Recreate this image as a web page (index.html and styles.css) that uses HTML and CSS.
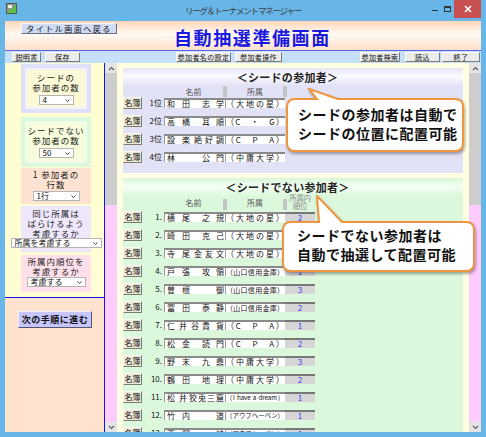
FILE: index.html
```html
<!DOCTYPE html>
<html lang="ja">
<head>
    <meta charset="UTF-8">
    <meta name="viewport" content="width=device-width, initial-scale=1.0">
    <title>リーグ＆トーナメントマネージャー</title>
    <link rel="stylesheet" href="styles.css">
</head>
<body>
    <div class="window">
        <div class="titlebar">
            <div class="title-left">
                <svg class="app-icon" width="11" height="11" viewBox="0 0 11 11">
                    <rect x="0.5" y="0.5" width="10" height="10" fill="#8a968a" stroke="#4f5a4f"/>
                    <path d="M1 10 L10 2 L10 10 Z" fill="#5fbf45"/>
                    <rect x="2" y="2" width="4" height="3" fill="#eeeeee"/>
                </svg>
            </div>
            <span class="win-title">リーグ＆トーナメントマネージャー</span>
            <div class="win-controls">
                <span class="ctl ctl-min"><i></i></span>
                <span class="ctl ctl-max"><i></i></span>
                <span class="ctl ctl-close">
                    <svg width="8" height="8" viewBox="0 0 8 8"><path d="M1 1 L7 7 M7 1 L1 7" stroke="#fff" stroke-width="1.6"/></svg>
                </span>
            </div>
        </div>

        <div class="client">
            <div class="head">
                <button class="back-btn">タイトル画面へ戻る</button>
                <h1>自動抽選準備画面</h1>
            </div>

            <div class="toolbar">
                <div class="tool-group">
                    <button class="tool-btn btn-manual">説明書</button>
                    <button class="tool-btn btn-save">保存</button>
                </div>
                <div class="tool-group tool-mid">
                    <button class="tool-btn btn-names">参加者名の設定</button>
                    <button class="tool-btn btn-ops">参加者操作</button>
                </div>
                <div class="tool-group tool-right">
                    <button class="tool-btn btn-search">参加者検索</button>
                    <button class="tool-btn btn-load">読込</button>
                    <button class="tool-btn btn-quit">終了</button>
                </div>
            </div>

            <div class="main">
                <aside class="side">
                    <div class="side-settings">
                        <div class="opt opt-seed">
                            <p>シードの</p>
                            <p>参加者の数</p>
                            <div class="select select-s"><span>4</span><svg width="5" height="3" viewBox="0 0 5 3"><polyline points="0.5,0.5 2.5,2.5 4.5,0.5" fill="none" stroke="#444" stroke-width="1"/></svg></div>
                        </div>
                        <div class="opt opt-free">
                            <p>シードでない</p>
                            <p>参加者の数</p>
                            <div class="select select-s"><span>50</span><svg width="5" height="3" viewBox="0 0 5 3"><polyline points="0.5,0.5 2.5,2.5 4.5,0.5" fill="none" stroke="#444" stroke-width="1"/></svg></div>
                        </div>
                        <div class="opt opt-lines">
                            <p>1 参加者の</p>
                            <p>行数</p>
                            <div class="select select-m"><span>1行</span><svg width="5" height="3" viewBox="0 0 5 3"><polyline points="0.5,0.5 2.5,2.5 4.5,0.5" fill="none" stroke="#444" stroke-width="1"/></svg></div>
                        </div>
                        <div class="opt opt-spread">
                            <p>同じ所属は</p>
                            <p>ばらけるよう</p>
                            <p>考慮するか</p>
                            <div class="select select-l"><span>所属を考慮する</span><svg width="5" height="3" viewBox="0 0 5 3"><polyline points="0.5,0.5 2.5,2.5 4.5,0.5" fill="none" stroke="#444" stroke-width="1"/></svg></div>
                        </div>
                        <div class="opt opt-rank">
                            <p>所属内順位を</p>
                            <p>考慮するか</p>
                            <div class="select select-r"><span>考慮する</span><svg width="5" height="3" viewBox="0 0 5 3"><polyline points="0.5,0.5 2.5,2.5 4.5,0.5" fill="none" stroke="#444" stroke-width="1"/></svg></div>
                        </div>
                    </div>
                    <div class="side-next">
                        <button class="next-btn">次の手順に進む</button>
                    </div>
                </aside>

                <div class="vscroll">
                    <div class="vs-arrow"><svg width="7" height="5" viewBox="0 0 7 5"><polyline points="1,4 3.5,1.5 6,4" fill="none" stroke="#606060" stroke-width="1.2"/></svg></div>
                    <div class="vs-thumb"></div>
                    <div class="vs-track"></div>
                    <div class="vs-arrow"><svg width="7" height="5" viewBox="0 0 7 5"><polyline points="1,1 3.5,3.5 6,1" fill="none" stroke="#606060" stroke-width="1.2"/></svg></div>
                </div>

                <div class="content">
                    <section class="group group-seed">
                        <div class="group-title">＜シードの参加者＞</div>
                        <div class="colhead">
                            <span class="sp"></span>
                            <span class="c-name">名前</span>
                            <span class="bar"></span>
                            <span class="c-aff">所属</span>
                            <span class="bar"></span>
                        </div>
                        <div class="row">
                            <button class="meibo">名簿</button><span class="no">1位</span>
                            <span class="fld name"><span class="sei">和田</span><span class="mei">志学</span></span>
                            <span class="fld aff">（大地の星）</span>
                        </div>
                        <div class="row">
                            <button class="meibo">名簿</button><span class="no">2位</span>
                            <span class="fld name"><span class="sei">高橋</span><span class="mei">耳順</span></span>
                            <span class="fld aff">（C　・　G）</span>
                        </div>
                        <div class="row">
                            <button class="meibo">名簿</button><span class="no">3位</span>
                            <span class="fld name"><span class="sei">設楽</span><span class="mei m3">絶好調</span></span>
                            <span class="fld aff">（C　P　A）</span>
                        </div>
                        <div class="row">
                            <button class="meibo">名簿</button><span class="no">4位</span>
                            <span class="fld name"><span class="sei">林</span><span class="mei">公門</span></span>
                            <span class="fld aff">（中庸大学）</span>
                        </div>
                    </section>

                    <section class="group group-free">
                        <div class="group-title">＜シードでない参加者＞</div>
                        <div class="colhead">
                            <span class="sp"></span>
                            <span class="c-name">名前</span>
                            <span class="bar"></span>
                            <span class="c-aff">所属</span>
                            <span class="bar"></span>
                            <span class="c-rank">所属内<br>順位</span>
                        </div>
                        <div class="row">
                            <button class="meibo">名簿</button><span class="no">1.</span>
                            <span class="fld name"><span class="sei">横尾</span><span class="mei">之規</span></span>
                            <span class="fld aff">（大地の星）</span><span class="fld rank">2</span>
                        </div>
                        <div class="row">
                            <button class="meibo">名簿</button><span class="no">2.</span>
                            <span class="fld name"><span class="sei">崎田</span><span class="mei">克己</span></span>
                            <span class="fld aff">（大地の星）</span><span class="fld rank">1</span>
                        </div>
                        <div class="row">
                            <button class="meibo">名簿</button><span class="no">3.</span>
                            <span class="fld name"><span class="sei">寺尾</span><span class="mei m3">金友文</span></span>
                            <span class="fld aff">（大地の星）</span><span class="fld rank">3</span>
                        </div>
                        <div class="row">
                            <button class="meibo">名簿</button><span class="no">4.</span>
                            <span class="fld name"><span class="sei">戸張</span><span class="mei">攻領</span></span>
                            <span class="fld aff aff-long">（山口信用金庫）</span><span class="fld rank">1</span>
                        </div>
                        <div class="row">
                            <button class="meibo">名簿</button><span class="no">5.</span>
                            <span class="fld name"><span class="sei">曽根</span><span class="mei">御</span></span>
                            <span class="fld aff aff-long">（山口信用金庫）</span><span class="fld rank">3</span>
                        </div>
                        <div class="row">
                            <button class="meibo">名簿</button><span class="no">6.</span>
                            <span class="fld name"><span class="sei">冨田</span><span class="mei">泰静</span></span>
                            <span class="fld aff aff-long">（山口信用金庫）</span><span class="fld rank">2</span>
                        </div>
                        <div class="row">
                            <button class="meibo">名簿</button><span class="no">7.</span>
                            <span class="fld name"><span class="sei s-tight">仁井谷</span><span class="mei">貴貨</span></span>
                            <span class="fld aff">（C　P　A）</span><span class="fld rank">1</span>
                        </div>
                        <div class="row">
                            <button class="meibo">名簿</button><span class="no">8.</span>
                            <span class="fld name"><span class="sei">松金</span><span class="mei">読門</span></span>
                            <span class="fld aff">（C　P　A）</span><span class="fld rank">2</span>
                        </div>
                        <div class="row">
                            <button class="meibo">名簿</button><span class="no">9.</span>
                            <span class="fld name"><span class="sei">野末</span><span class="mei">九鼎</span></span>
                            <span class="fld aff">（中庸大学）</span><span class="fld rank">3</span>
                        </div>
                        <div class="row">
                            <button class="meibo">名簿</button><span class="no">10.</span>
                            <span class="fld name"><span class="sei">鶴田</span><span class="mei">地理</span></span>
                            <span class="fld aff">（中庸大学）</span><span class="fld rank">2</span>
                        </div>
                        <div class="row">
                            <button class="meibo">名簿</button><span class="no">11.</span>
                            <span class="fld name"><span class="sei s-tight">松井</span><span class="mei m4">狡兎三窟</span></span>
                            <span class="fld aff aff-latin">（I have a dream）</span><span class="fld rank">1</span>
                        </div>
                        <div class="row">
                            <button class="meibo">名簿</button><span class="no">12.</span>
                            <span class="fld name"><span class="sei">竹内</span><span class="mei">道</span></span>
                            <span class="fld aff aff-xl">（アウフヘーベン）</span><span class="fld rank">1</span>
                        </div>
                        <div class="row">
                            <button class="meibo">名簿</button><span class="no">13.</span>
                            <span class="fld name"><span class="sei">西野</span><span class="mei">純</span></span>
                            <span class="fld aff aff-xl">（アウフヘーベン）</span><span class="fld rank">1</span>
                        </div>
                    </section>
                </div>

                <div class="vscroll">
                    <div class="vs-arrow"><svg width="7" height="5" viewBox="0 0 7 5"><polyline points="1,4 3.5,1.5 6,4" fill="none" stroke="#606060" stroke-width="1.2"/></svg></div>
                    <div class="vs-thumb"></div>
                    <div class="vs-track"></div>
                    <div class="vs-arrow"><svg width="7" height="5" viewBox="0 0 7 5"><polyline points="1,1 3.5,3.5 6,1" fill="none" stroke="#606060" stroke-width="1.2"/></svg></div>
                </div>

                <!-- explanation balloons over the list -->
                <div class="callout callout-seed">
                    <svg width="180" height="65" viewBox="0 0 180 65">
                        <path d="M9,11 H31 L23,1 L52,11 H169 Q177,11 177,19 V55 Q177,63 169,63 H9 Q1,63 1,55 V19 Q1,11 9,11 Z" fill="#fff" stroke="#f0953f" stroke-width="2"/>
                    </svg>
                    <p>シードの参加者は自動で<br>シードの位置に配置可能</p>
                </div>
                <div class="callout callout-free">
                    <svg width="195" height="78" viewBox="0 0 195 78">
                        <path d="M9,27 H37 L35,1 L60,27 H184 Q192,27 192,35 V68 Q192,76 184,76 H9 Q1,76 1,68 V35 Q1,27 9,27 Z" fill="#fff" stroke="#f0953f" stroke-width="2"/>
                    </svg>
                    <p>シードでない参加者は<br>自動で抽選して配置可能</p>
                </div>
            </div>
        </div>
    </div>
</body>
</html>
```

FILE: styles.css
```css
* {
    box-sizing: border-box;
}

body {
    margin: 0;
    width: 486px;
    height: 437px;
    overflow: hidden;
    font-family: "Noto Sans CJK JP", "Noto Sans", sans-serif;
    color: #111;
}

button {
    font-family: inherit;
    color: #111;
    padding: 0;
    cursor: pointer;
}

.window {
    width: 486px;
    height: 437px;
    background: #68b6e8;
    padding: 0 5px 5px;
    display: flex;
    flex-direction: column;
}

/* title bar */
.titlebar {
    height: 21px;
    margin: 0 -5px;
    display: flex;
    align-items: flex-start;
}

.title-left {
    width: 61px;
    padding: 3px 0 0 6px;
}

.app-icon {
    display: block;
}

.win-title {
    flex: 1;
    text-align: center;
    font-size: 8.5px;
    line-height: 20px;
    letter-spacing: -1.2px;
    color: #3a3a3a;
}

.win-controls {
    width: 61px;
    display: flex;
    justify-content: flex-end;
    padding-right: 5px;
}

.ctl {
    width: 13px;
    height: 18px;
    display: flex;
    align-items: center;
    justify-content: center;
}

.ctl-min i {
    width: 6px;
    height: 1px;
    background: #333;
    margin-top: 3px;
}

.ctl-max i {
    width: 7px;
    height: 6px;
    border: 1px solid #333;
    border-top-width: 2px;
}

.ctl-close {
    width: 27px;
    background: #c75050;
}

.ctl-close svg {
    display: block;
}

/* client area */
.client {
    flex: 1;
    min-height: 0;
    display: flex;
    flex-direction: column;
    background: #fff;
}

.head {
    height: 29px;
    display: flex;
    align-items: flex-start;
    background: linear-gradient(to bottom, #ffd5b6 0%, #fffaf5 45%, #ffe0c9 100%);
}

.back-btn {
    margin: 2px 0 0 16px;
    width: 96px;
    height: 11px;
    font-size: 8px;
    line-height: 9px;
    letter-spacing: 1.5px;
    background: #d0dbf4;
    border: 1px solid;
    border-color: #f4f6ff #6c6c80 #6c6c80 #f4f6ff;
}

.head h1 {
    margin: 6px 0 0 57px;
    font-size: 18px;
    line-height: 20px;
    letter-spacing: 1.6px;
    color: #1818e0;
    font-weight: bold;
}

.toolbar {
    height: 13px;
    border-top: 1px solid #5d63e8;
    background: #c6e0fa;
    display: flex;
    padding: 1px 1px 0 7px;
}

.tool-group {
    display: flex;
}

.tool-mid {
    margin-left: 92px;
}

.tool-right {
    margin-left: auto;
}

.tool-btn {
    height: 10px;
    font-size: 7px;
    line-height: 8px;
    letter-spacing: .4px;
    background: #ebebeb;
    border: 1px solid;
    border-color: #fff #7a7a7a #7a7a7a #fff;
    margin-right: 4px;
}

.btn-manual { width: 29px; }
.btn-save { width: 35px; }
.btn-names { width: 55px; }
.btn-ops { width: 47px; margin-right: 0; }
.btn-search { width: 40px; margin-right: 5px; }
.btn-load { width: 35px; margin-right: 2px; }
.btn-quit { width: 38px; margin-right: 0; }

/* main area */
.main {
    flex: 1;
    min-height: 0;
    display: flex;
    position: relative;
}

.side {
    width: 100px;
    border-right: 1px solid #1414e6;
    display: flex;
    flex-direction: column;
}

.side-settings {
    height: 235px;
    background: #fffed2;
    border-bottom: 1px solid #1414e6;
    padding-top: 1px;
}

.side-next {
    flex: 1;
    background: #ffe3ce;
    padding: 6px 0 0 13px;
}

.opt {
    margin-left: 16px;
    width: 70px;
    display: flex;
    flex-direction: column;
    align-items: center;
    text-align: center;
    font-size: 8.5px;
    line-height: 10px;
    letter-spacing: 1px;
    color: #222;
}

.opt p {
    margin: 0;
}

.opt-seed {
    height: 49px;
    padding-top: 4px;
    border: 4px solid #e0e0fa;
    box-shadow: inset 0 0 0 2px #f2f2fd;
    background: #fcfad6;
}

.opt-free {
    margin-top: 4px;
    height: 50px;
    padding-top: 4px;
    border: 4px solid #dbf8db;
    box-shadow: inset 0 0 0 2px #effdef;
    background: #f6fcdc;
}

.opt-lines {
    margin-top: 1px;
    height: 36px;
    padding-top: 1px;
    background: #ffe3d2;
}

.opt-spread {
    margin-top: 2px;
    height: 46px;
    padding-top: 2px;
    background: #efe8fd;
}

.opt-rank {
    margin-top: 3px;
    height: 37px;
    padding-top: 1px;
    background: #ffe0ea;
}

.select {
    flex-shrink: 0;
    height: 10px;
    margin-top: 3px;
    display: flex;
    align-items: center;
    justify-content: space-between;
    padding: 0 3px;
    background: #fff;
    border: 1px solid #b4b4b4;
    font-size: 8px;
    line-height: 8px;
    letter-spacing: 0;
    text-align: left;
    color: #111;
}

.select svg {
    display: block;
}

.select-s { width: 35px; }
.select-m { width: 47px; margin-top: 2px; }
.select-l { width: 91px; margin-top: 0; }
.select-r { width: 59px; margin-top: 1px; }

.next-btn {
    width: 74px;
    height: 17px;
    font-size: 9px;
    font-weight: bold;
    letter-spacing: .5px;
    background: #c6c6fc;
    border: 1px solid;
    border-color: #eeeeff #55556e #55556e #eeeeff;
}

/* scroll bars */
.vscroll {
    width: 12px;
    display: flex;
    flex-direction: column;
}

.vs-arrow {
    height: 10px;
    background: #e4e4e4;
    display: flex;
    align-items: center;
    justify-content: center;
}

.vs-arrow svg {
    display: block;
}

.vs-thumb {
    height: 132px;
    background: #cdcdcd;
}

.vs-track {
    flex: 1;
    background: #ffccff;
}

/* participant lists */
.content {
    width: 352px;
    background: #ffffe2;
    padding: 5px 6px 0;
    overflow: hidden;
}

.group {
    width: 340px;
}

.group-seed {
    height: 105px;
    background: #e2e2f6;
}

.group-free {
    margin-top: 5px;
    height: 300px;
    background: #dcf8dc;
}

.group-title {
    height: 18px;
    line-height: 18px;
    padding-right: 11px;
    text-align: center;
    font-size: 11px;
    font-weight: bold;
    letter-spacing: .3px;
    color: #222;
}

.group-seed .group-title {
    background: linear-gradient(to bottom, #e4e4f7, #fafaff 45%, #e2e2f6);
}

.group-free .group-title {
    background: linear-gradient(to bottom, #d8f4d8, #f4fff4 45%, #dcf8dc);
}

.colhead {
    display: flex;
    align-items: flex-start;
    height: 8px;
    font-size: 8px;
    line-height: 12px;
    color: #555;
}

.colhead .sp { width: 41px; }

.colhead .c-name {
    width: 59px;
    text-align: center;
}

.colhead .c-aff {
    width: 56px;
    text-align: center;
}

.colhead .bar {
    width: 4px;
    height: 11px;
    background: #c4c4c4;
}

.colhead .c-rank {
    width: 26px;
    text-align: center;
    font-size: 7.5px;
    line-height: 8px;
    letter-spacing: -.3px;
    color: #8c8c8c;
}

.group-free .colhead {
    height: 14px;
    margin-top: -2px;
}

.group-free .colhead .c-name,
.group-free .colhead .c-aff {
    padding-top: 3px;
}

.group-free .colhead .bar {
    margin-top: 5px;
}

.row {
    display: flex;
    align-items: center;
    height: 18px;
}

.meibo {
    width: 19px;
    height: 12px;
    font-size: 8px;
    line-height: 10px;
    background: #ebe9d6;
    border: 1px solid;
    border-color: #f8f8f0 #7c7c6c #7c7c6c #f8f8f0;
}

.no {
    width: 22px;
    padding-right: 2px;
    text-align: right;
    font-size: 8px;
    line-height: 10px;
}

.fld {
    height: 10px;
    font-size: 8px;
    line-height: 8px;
    border-top: 2px solid #8a8a8a;
    white-space: nowrap;
}

.name {
    width: 61px;
    display: flex;
    justify-content: space-between;
    padding: 0 1px 0 2px;
    background: #fff;
    border-left: 1px solid #9a9a9a;
}

.sei {
    letter-spacing: 7px;
    margin-right: -7px;
}

.sei.s-tight {
    letter-spacing: 4px;
    margin-right: -4px;
}

.mei {
    letter-spacing: 6px;
    margin-right: -6px;
}

.mei.m3 {
    letter-spacing: 3px;
    margin-right: -3px;
}

.mei.m4 {
    letter-spacing: 1px;
    margin-right: -1px;
}

.aff {
    width: 60px;
    padding: 0 1px 0 0;
    background: #fff;
    border-left: 1px solid #9a9a9a;
    font-size: 8px;
    white-space: normal;
    overflow: hidden;
    text-align: justify;
    text-align-last: justify;
}

.aff-long {
    font-size: 7px;
}

.aff-xl {
    font-size: 6.4px;
}

.aff-latin {
    font-size: 6.3px;
    letter-spacing: -.1px;
}

.rank {
    width: 30px;
    background: #d6d6d6;
    border-top-color: #777;
    text-align: center;
    color: #3636f5;
}

/* balloons */
.callout {
    position: absolute;
}

.callout svg {
    position: absolute;
    left: 0;
    top: 0;
    filter: drop-shadow(1px 2px 1.5px rgba(0, 0, 0, .35));
}

.callout p {
    position: relative;
    margin: 0;
    font-size: 14px;
    line-height: 19px;
    font-weight: bold;
    letter-spacing: .5px;
    color: #111;
    white-space: nowrap;
}

.callout-seed {
    left: 281px;
    top: 25px;
    width: 180px;
    height: 65px;
    padding: 17px 0 0 12px;
}

.callout-free {
    left: 277px;
    top: 132px;
    width: 195px;
    height: 78px;
    padding: 31px 0 0 15px;
}
```
